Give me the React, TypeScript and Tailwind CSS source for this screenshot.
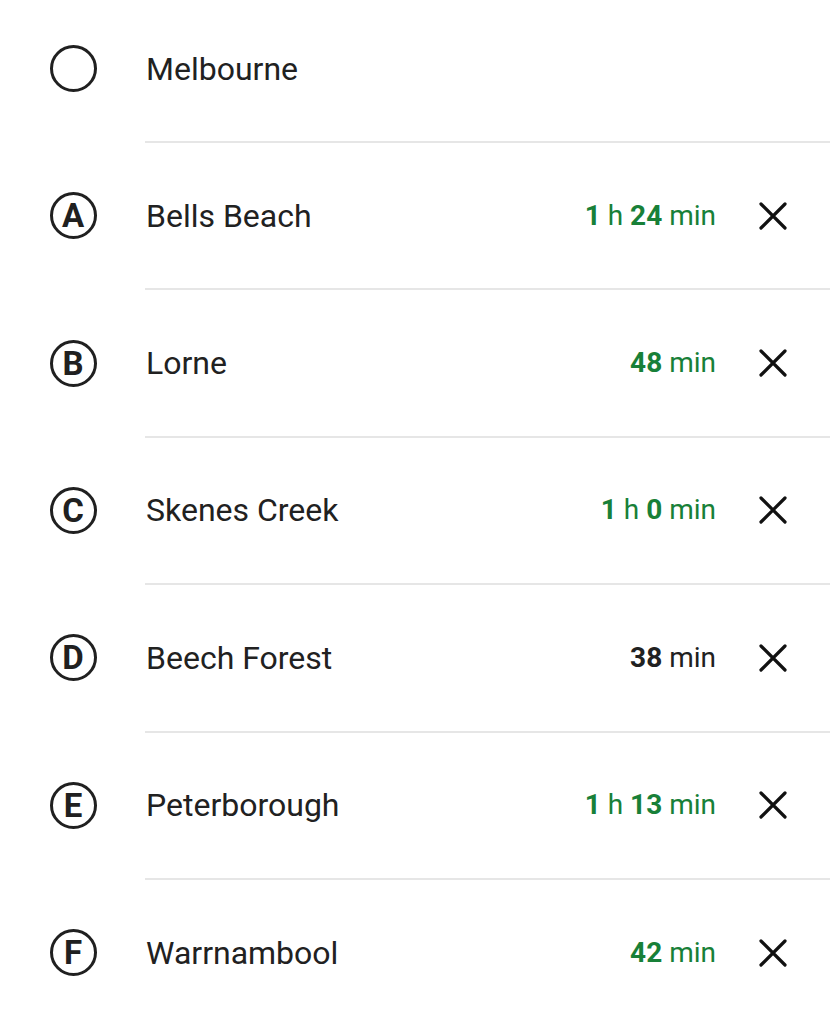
import React from 'react';

type Part = { n: string; u: string };

interface Stop {
  label: string | null;
  name: string;
  time?: Part[];
  green?: boolean;
}

const stops: Stop[] = [
  { label: null, name: 'Melbourne' },
  { label: 'A', name: 'Bells Beach', time: [{ n: '1', u: 'h' }, { n: '24', u: 'min' }], green: true },
  { label: 'B', name: 'Lorne', time: [{ n: '48', u: 'min' }], green: true },
  { label: 'C', name: 'Skenes Creek', time: [{ n: '1', u: 'h' }, { n: '0', u: 'min' }], green: true },
  { label: 'D', name: 'Beech Forest', time: [{ n: '38', u: 'min' }], green: false },
  { label: 'E', name: 'Peterborough', time: [{ n: '1', u: 'h' }, { n: '13', u: 'min' }], green: true },
  { label: 'F', name: 'Warrnambool', time: [{ n: '42', u: 'min' }], green: true },
];

function CloseIcon() {
  return (
    <svg width="28" height="28" viewBox="0 0 28 28" fill="none">
      <path d="M2 2L26 26M26 2L2 26" stroke="#111" strokeWidth="3.2" strokeLinecap="round" />
    </svg>
  );
}

function StopRow({ stop, first }: { stop: Stop; first: boolean }) {
  return (
    <div className={`flex items-center ${first ? 'h-[141px] pb-[4px]' : 'h-[145.4px]'}`}>
      {/* Marker */}
      <div className="w-[146px] flex justify-center shrink-0">
        <div className="w-[47px] h-[47px] rounded-full border-[3px] border-[#202020] flex items-center justify-center">
          {stop.label && (
            <span className="text-[33px] font-bold text-[#202020] leading-none">{stop.label}</span>
          )}
        </div>
      </div>

      <div className="flex-1 text-[32px] text-[#212121] leading-none">{stop.name}</div>

      {stop.time && (
        <>
          <div className={`text-[28px] leading-none ${stop.green ? 'text-[#188038]' : 'text-[#212121]'}`}>
            {stop.time.map((p, i) => (
              <span key={i}>
                {i > 0 && ' '}
                <span className="font-bold">{p.n}</span> {p.u}
              </span>
            ))}
          </div>
          <div className="ml-[43px] mr-[43px] flex items-center">
            <CloseIcon />
          </div>
        </>
      )}
    </div>
  );
}

export default function App() {
  return (
    <div className="w-[830px] h-[1024px] overflow-hidden bg-white" style={{ fontFamily: 'Roboto, "Noto Sans", sans-serif' }}>
      {stops.map((s, i) => (
        <div key={i}>
          {i > 0 && <div className="ml-[145px] h-[2px] bg-[#e6e6e6]" />}
          <StopRow stop={s} first={i === 0} />
        </div>
      ))}
    </div>
  );
}
